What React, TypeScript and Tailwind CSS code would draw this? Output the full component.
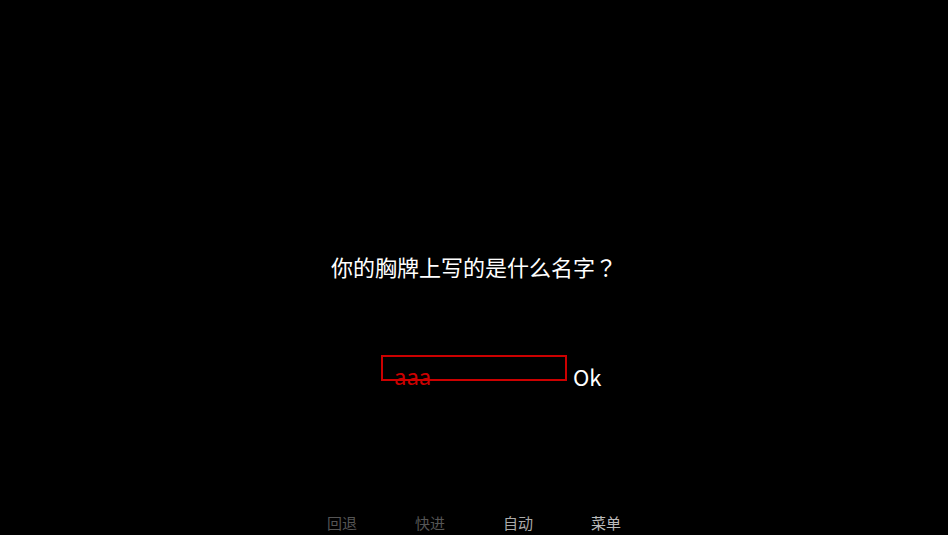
import React from "react";

export default function App() {
  return (
    <div
      className="flex h-[535px] w-full flex-col items-center overflow-hidden bg-black"
      style={{ fontFamily: '"Noto Sans CJK SC", "Noto Sans", sans-serif' }}
    >
      <div className="pt-[255px] text-[22px] leading-[22px] text-white">
        你的胸牌上写的是什么名字
        <span style={{ fontFamily: '"Noto Sans CJK JP", "Noto Sans CJK SC", sans-serif' }}>？</span>
      </div>
      <div className="mt-[78px] grid w-full grid-cols-[1fr_auto_1fr] items-start">
        <div />
        <div className="h-[26px] w-[186px] overflow-visible border-2 border-[#cc0000] pl-[11px] pt-[7px] text-[22px] leading-[22px] text-[#cc0000]">
          aaa
        </div>
        <div className="ml-[6px] pt-[10px] text-[22px] leading-[22px] text-white">Ok</div>
      </div>
      <div className="mt-auto mb-[5px] flex gap-[58px] text-[15px] leading-[15px]">
        <span className="text-[#555555]">回退</span>
        <span className="text-[#555555]">快进</span>
        <span className="text-[#aaaaaa]">自动</span>
        <span className="text-[#bbbbbb]">菜单</span>
      </div>
    </div>
  );
}
